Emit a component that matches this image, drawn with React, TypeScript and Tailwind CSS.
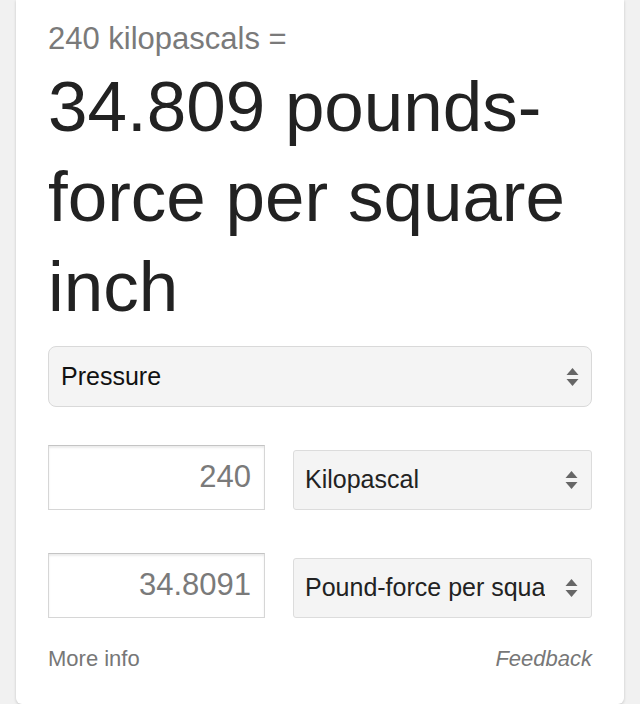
import React from 'react';

function Arrows() {
  return (
    <svg width="13" height="22" viewBox="0 0 13 22" className="shrink-0">
      <path d="M6.5 2 L12.5 9 L0.5 9 Z" fill="#666" />
      <path d="M6.5 20 L12.5 13 L0.5 13 Z" fill="#666" />
    </svg>
  );
}

function UnitSelect({ label }: { label: string }) {
  return (
    <div className="flex h-[60px] items-center justify-between rounded-[3px] border border-[#dcdcdc] bg-[#f4f4f4] pl-[11px] pr-[13px] text-[25px] text-[#222]">
      <span className="overflow-hidden whitespace-nowrap">{label}</span>
      <Arrows />
    </div>
  );
}

function ValueBox({ value }: { value: string }) {
  return (
    <div className="flex h-[65px] items-center justify-end border border-[#d6d6d6] border-t-[#c4c4c4] bg-white pr-[13px] text-[31px] text-[#7a7a7a] shadow-[inset_0_2px_2px_rgba(0,0,0,0.08)]">
      {value}
    </div>
  );
}

export default function App() {
  return (
    <main
      className="min-h-[704px] bg-[#f1f1f1] px-[16px]"
      style={{ fontFamily: '"Liberation Sans", Arial, sans-serif' }}
    >
      <div className="rounded-b-[6px] bg-white px-[32px] pb-[29px] pt-[20px] shadow-[0_1px_3px_rgba(0,0,0,0.18)]">
        <p className="text-[31px] leading-[38px] text-[#7a7a7a]">240 kilopascals =</p>

        <h1 className="mt-[4px] text-[71px] leading-[90px] text-[#222]">
          34.809 pounds-force per square inch
        </h1>

        <div className="mt-[14px] flex h-[61px] items-center justify-between rounded-[8px] border border-[#d9d9d9] bg-[#f4f4f4] pl-[12px] pr-[12px] text-[25px] text-[#111]">
          <span>Pressure</span>
          <Arrows />
        </div>

        <div className="mt-[38px] grid grid-cols-[217px_1fr] items-end gap-x-[28px]">
          <ValueBox value="240" />
          <UnitSelect label="Kilopascal" />
        </div>

        <div className="mt-[43px] grid grid-cols-[217px_1fr] items-end gap-x-[28px]">
          <ValueBox value="34.8091" />
          <UnitSelect label="Pound-force per squa" />
        </div>

        <div className="mt-[24px] flex items-center justify-between text-[22px] leading-[33px] text-[#777]">
          <span>More info</span>
          <span className="italic">Feedback</span>
        </div>
      </div>
    </main>
  );
}
